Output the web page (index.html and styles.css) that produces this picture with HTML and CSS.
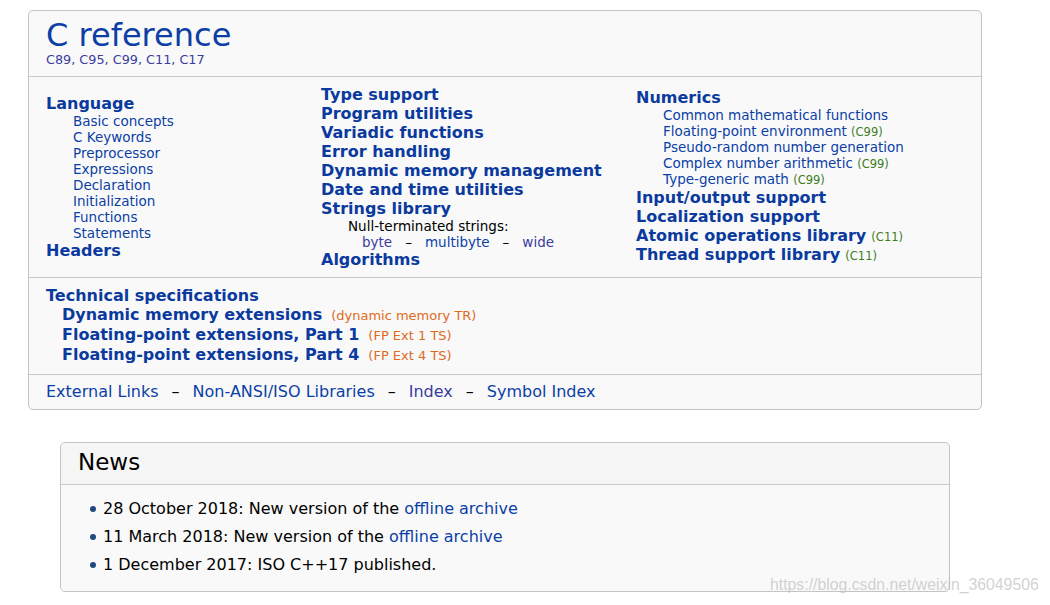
FILE: index.html
```html
<!DOCTYPE html>
<html>
<head>
<meta charset="utf-8">
<link rel="stylesheet" href="styles.css">
</head>
<body>
<div class="page">
  <div class="mainbox">
    <div class="head">
      <div class="title">C reference</div>
      <div class="subtitle">C89, C95, C99, C11, C17</div>
    </div>
    <div class="cols">
      <div class="col">
        <a class="h">Language</a>
        <div class="sub">
          <a>Basic concepts</a>
          <a>C Keywords</a>
          <a>Preprocessor</a>
          <a>Expressions</a>
          <a>Declaration</a>
          <a>Initialization</a>
          <a>Functions</a>
          <a>Statements</a>
        </div>
        <a class="h">Headers</a>
      </div>
      <div class="col">
        <a class="h">Type support</a>
        <a class="h">Program utilities</a>
        <a class="h">Variadic functions</a>
        <a class="h">Error handling</a>
        <a class="h">Dynamic memory management</a>
        <a class="h">Date and time utilities</a>
        <a class="h">Strings library</a>
        <div class="sub">
          <span class="plain">Null-terminated strings:</span>
          <div class="strs"><a class="v">byte</a><span class="dash">–</span><a>multibyte</a><span class="dash">–</span><a class="v">wide</a></div>
        </div>
        <a class="h">Algorithms</a>
      </div>
      <div class="col col3">
        <a class="h">Numerics</a>
        <div class="sub">
          <a>Common mathematical functions</a>
          <span class="row"><a>Floating-point environment</a> <span class="rev">(C99)</span></span>
          <a>Pseudo-random number generation</a>
          <span class="row"><a>Complex number arithmetic</a> <span class="rev">(C99)</span></span>
          <span class="row"><a>Type-generic math</a> <span class="rev">(C99)</span></span>
        </div>
        <a class="h">Input/output support</a>
        <a class="h">Localization support</a>
        <span class="hrow"><a class="h">Atomic operations library</a> <span class="rev">(C11)</span></span>
        <span class="hrow"><a class="h">Thread support library</a> <span class="rev">(C11)</span></span>
      </div>
    </div>
    <div class="specs">
      <a class="h">Technical specifications</a>
      <div class="spec"><a class="h">Dynamic memory extensions</a><span class="ts">(dynamic memory TR)</span></div>
      <div class="spec"><a class="h">Floating-point extensions, Part 1</a><span class="ts">(FP Ext 1 TS)</span></div>
      <div class="spec"><a class="h">Floating-point extensions, Part 4</a><span class="ts">(FP Ext 4 TS)</span></div>
    </div>
    <div class="foot">
      <a>External Links</a><span class="fdash">–</span><a>Non-ANSI/ISO Libraries</a><span class="fdash">–</span><a class="v">Index</a><span class="fdash">–</span><a>Symbol Index</a>
    </div>
  </div>

  <div class="news">
    <div class="news-head">News</div>
    <ul class="news-list">
      <li>28 October 2018: New version of the <a>offline archive</a></li>
      <li>11 March 2018: New version of the <a>offline archive</a></li>
      <li>1 December 2017: ISO C++17 published.</li>
    </ul>
  </div>
</div>
<div class="watermark">https://blog.csdn.net/weixin_36049506</div>
</body>
</html>
```

FILE: styles.css
```css
html, body {
  margin: 0;
  padding: 0;
  background: #ffffff;
  font-family: "DejaVu Sans", sans-serif;
  color: #000;
}

a {
  color: #0b3fa6;
  text-decoration: none;
}

a.v {
  color: #3b3c9e;
}

.page {
  padding: 10px 0 0 28px;
  width: 954px;
}

.mainbox {
  border: 1px solid #c4c4c4;
  border-radius: 5px;
  background: #f9f9f9;
}

.head {
  padding: 6px 17px 10px;
  border-bottom: 1px solid #c8c8c8;
}

.title {
  font-size: 32px;
  line-height: 36px;
  color: #0b3fa6;
}

.subtitle {
  font-size: 12.8px;
  line-height: 13px;
  color: #3a3d9e;
}

.cols {
  display: grid;
  grid-template-columns: 275px 315px 1fr;
  align-items: center;
  padding: 8px 17px 8px;
  border-bottom: 1px solid #c8c8c8;
}

.col {
  display: flex;
  flex-direction: column;
  align-items: flex-start;
}

.col3 {
  margin-bottom: 3px;
}

.col3 .sub {
  margin-bottom: 1px;
}

.h {
  font-weight: bold;
  font-size: 16px;
  line-height: 19px;
  color: #0b3a9e;
}

.hrow {
  height: 19px;
  line-height: 19px;
}

.row {
  height: 16px;
}

.sub {
  display: flex;
  flex-direction: column;
  align-items: flex-start;
  padding-left: 27px;
  font-size: 13.5px;
  line-height: 16px;
}

.plain {
  color: #000;
}

.strs {
  padding-left: 14px;
}

.dash {
  margin: 0 13px;
  color: #000;
}

.rev {
  font-size: 11.5px;
  line-height: 1;
  color: #3e7d1e;
}

.specs {
  display: flex;
  flex-direction: column;
  align-items: flex-start;
  padding: 8px 17px 9px;
  border-bottom: 1px solid #c8c8c8;
}

.spec {
  padding-left: 16px;
  height: 20px;
  line-height: 20px;
  white-space: nowrap;
}

.spec .h {
  line-height: 20px;
}

.ts {
  margin-left: 9px;
  font-size: 13px;
  line-height: 1;
  color: #e06a1c;
}

.foot {
  padding: 7px 17px 8px;
  font-size: 16px;
  line-height: 19px;
}

.fdash {
  margin: 0 13px;
}

.news {
  margin: 32px 0 0 32px;
  width: 888px;
  border: 1px solid #c4c4c4;
  border-radius: 5px;
  background: #f9f9f9;
}

.news-head {
  font-size: 23px;
  line-height: 38px;
  padding: 0 17px 3px;
  background: #f6f6f6;
  border-radius: 5px 5px 0 0;
  border-bottom: 1px solid #c8c8c8;
}

.news-list {
  list-style: none;
  margin: 0;
  padding: 10px 0 12px 29px;
  font-size: 16px;
  line-height: 28px;
}

.news-list li::before {
  content: "";
  display: inline-block;
  vertical-align: middle;
  width: 6px;
  height: 6px;
  border-radius: 50%;
  background: #1f4a80;
  margin-right: 7px;
  position: relative;
  top: -1px;
}

.watermark {
  position: absolute;
  left: 770px;
  top: 576px;
  font-family: "Liberation Sans", Arial, sans-serif;
  font-size: 15.8px;
  color: rgba(190, 190, 190, 0.7);
  white-space: nowrap;
}
```
